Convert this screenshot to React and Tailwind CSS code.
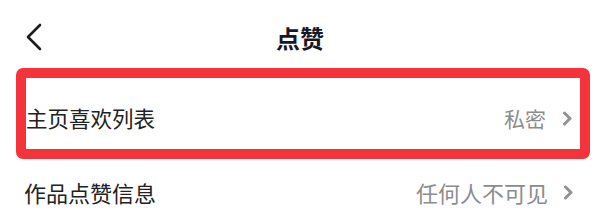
export default function App() {
  const font = { fontFamily: '"Noto Sans CJK SC", "Noto Sans", sans-serif' };
  const Chevron = () => (
    <svg width="11" height="15" viewBox="0 0 11 15" fill="none">
      <path d="M2.5 2 L8 7.5 L2.5 13" stroke="#929292" strokeWidth="3" strokeLinecap="round" strokeLinejoin="round" />
    </svg>
  );
  return (
    <div className="w-[600px] h-[221px] bg-white overflow-hidden" style={font}>
      <div className="relative h-[68px] flex items-center justify-center pt-[8px]">
        <svg className="absolute left-[25px] top-[23px]" width="18" height="28" viewBox="0 0 18 28" fill="none">
          <path d="M15 2 L3 14 L15 26" stroke="#1c1c1c" strokeWidth="2.6" strokeLinecap="round" strokeLinejoin="round" />
        </svg>
        <span className="text-[24px] font-semibold text-[#161823] leading-none">点赞</span>
      </div>
      <div className="ml-[16px] w-[574px] h-[91px] border-[10px] border-[#f4333b] rounded-[7px] flex items-center justify-between pt-[9px] pr-[7px]">
        <span className="text-[21.5px] text-[#222222] leading-none">主页喜欢列表</span>
        <div className="flex items-center gap-[16px]">
          <span className="text-[21px] text-[#8c8c8c] leading-none">私密</span>
          <Chevron />
        </div>
      </div>
      <div className="h-[62px] flex items-center justify-between pl-[24px] pr-[26px] pt-[4px]">
        <span className="text-[22px] text-[#222222] leading-none">作品点赞信息</span>
        <div className="flex items-center gap-[15px]">
          <span className="text-[22px] text-[#8c8c8c] leading-none">任何人不可见</span>
          <Chevron />
        </div>
      </div>
    </div>
  );
}
